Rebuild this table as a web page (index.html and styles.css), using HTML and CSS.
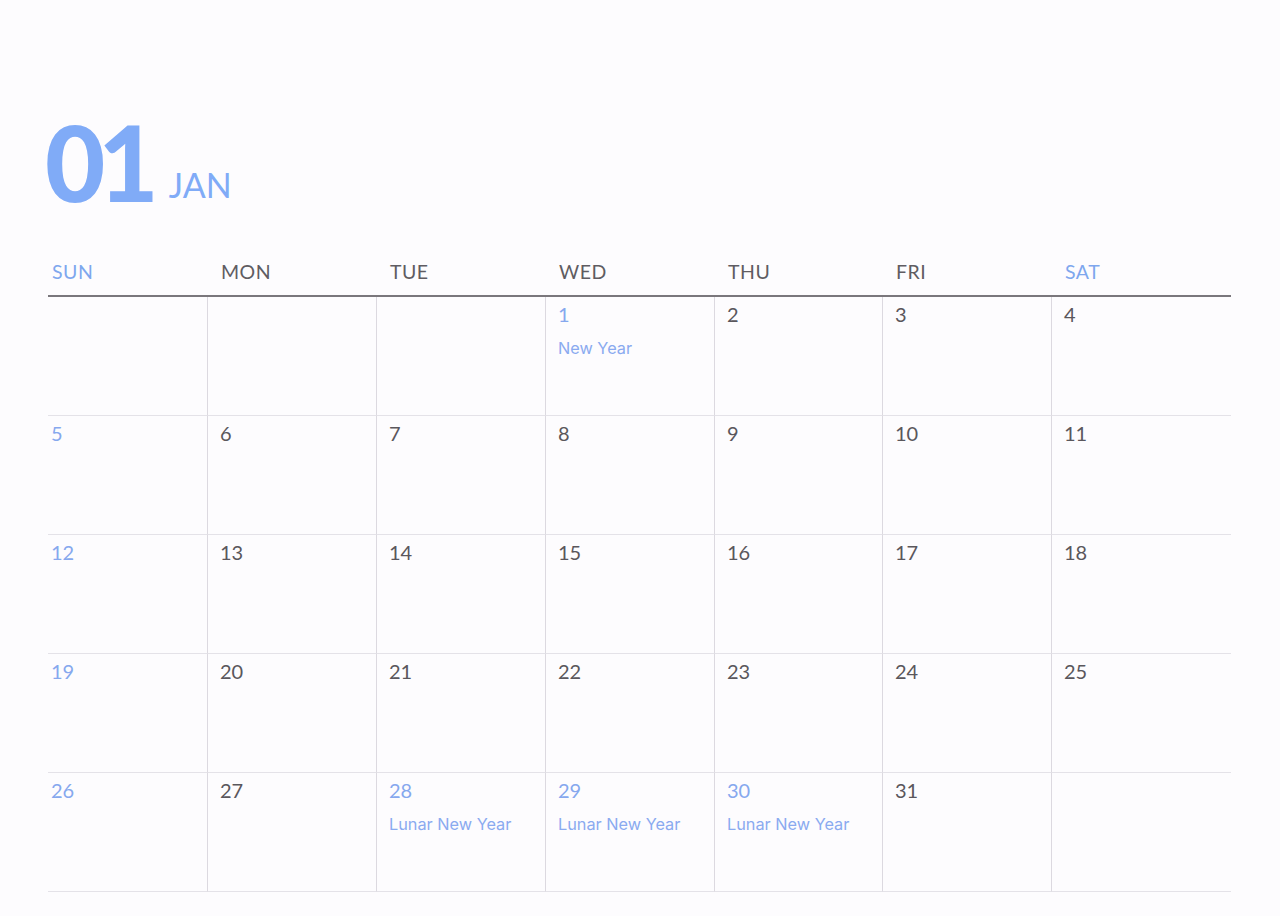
FILE: index.html
```html
<!DOCTYPE html>
<html>
<head>
<meta charset="utf-8">
<link rel="stylesheet" href="styles.css">
</head>
<body>
<div class="page">
  <div class="title">
    <span class="num">01</span>
    <span class="month">JAN</span>
  </div>
  <div class="weekdays">
    <div class="wd sun">SUN</div>
    <div class="wd">MON</div>
    <div class="wd">TUE</div>
    <div class="wd">WED</div>
    <div class="wd">THU</div>
    <div class="wd">FRI</div>
    <div class="wd sat">SAT</div>
  </div>
  <div class="grid">
    <div class="cell first"></div>
    <div class="cell"></div>
    <div class="cell"></div>
    <div class="cell"><div class="d hol">1</div><div class="ev">New Year</div></div>
    <div class="cell"><div class="d">2</div></div>
    <div class="cell"><div class="d">3</div></div>
    <div class="cell last"><div class="d">4</div></div>

    <div class="cell first"><div class="d hol">5</div></div>
    <div class="cell"><div class="d">6</div></div>
    <div class="cell"><div class="d">7</div></div>
    <div class="cell"><div class="d">8</div></div>
    <div class="cell"><div class="d">9</div></div>
    <div class="cell"><div class="d">10</div></div>
    <div class="cell last"><div class="d">11</div></div>

    <div class="cell first"><div class="d hol">12</div></div>
    <div class="cell"><div class="d">13</div></div>
    <div class="cell"><div class="d">14</div></div>
    <div class="cell"><div class="d">15</div></div>
    <div class="cell"><div class="d">16</div></div>
    <div class="cell"><div class="d">17</div></div>
    <div class="cell last"><div class="d">18</div></div>

    <div class="cell first"><div class="d hol">19</div></div>
    <div class="cell"><div class="d">20</div></div>
    <div class="cell"><div class="d">21</div></div>
    <div class="cell"><div class="d">22</div></div>
    <div class="cell"><div class="d">23</div></div>
    <div class="cell"><div class="d">24</div></div>
    <div class="cell last"><div class="d">25</div></div>

    <div class="cell first"><div class="d hol">26</div></div>
    <div class="cell"><div class="d">27</div></div>
    <div class="cell"><div class="d hol">28</div><div class="ev">Lunar New Year</div></div>
    <div class="cell"><div class="d hol">29</div><div class="ev">Lunar New Year</div></div>
    <div class="cell"><div class="d hol">30</div><div class="ev">Lunar New Year</div></div>
    <div class="cell"><div class="d">31</div></div>
    <div class="cell last"></div>
  </div>
</div>
</body>
</html>
```

FILE: styles.css
```css
html, body {
  margin: 0;
  padding: 0;
  background: #fdfcfe;
}
body {
  font-family: "Lato", "Inter", sans-serif;
  color: #555;
}
.page {
  width: 1183px;
  margin-left: 48px;
  padding-top: 98px;
}
.title {
  display: flex;
  align-items: flex-end;
  gap: 17px;
  height: 120px;
  margin-left: -3px;
}
.num {
  font-family: "Lato", sans-serif;
  font-weight: 900;
  font-size: 104px;
  line-height: 104px;
  color: #80abf7;
  letter-spacing: -7px;
  padding-bottom: 4px;
}
.month {
  font-family: "Lato", sans-serif;
  font-weight: 400;
  font-size: 34px;
  line-height: 34px;
  color: #80abf7;
  padding-bottom: 16px;
}
.weekdays {
  display: grid;
  grid-template-columns: 160px 169px 169px 169px 168px 169px 179px;
  margin-top: 42px;
  border-bottom: 2px solid #7a777c;
}
.wd {
  font-family: "Lato", sans-serif;
  font-size: 19.5px;
  line-height: 24px;
  padding: 0 0 11px 13px;
  color: #5f5c62;
  letter-spacing: 0.5px;
}
.wd.sun {
  padding-left: 4px;
}
.wd.sun, .wd.sat {
  color: #7ea7ee;
}
.grid {
  display: grid;
  grid-template-columns: 160px 169px 169px 169px 168px 169px 179px;
  grid-auto-rows: 119px;
}
.cell {
  border-right: 1px solid #dcd9e0;
  border-bottom: 1px solid #e4e2e8;
  padding: 5px 14px 0 12px;
}
.cell.first {
  padding-left: 3px;
}
.cell.last {
  border-right: none;
}
.d {
  font-family: "Lato", sans-serif;
  font-size: 20px;
  line-height: 24px;
  color: #5a575c;
}
.d.hol {
  color: #86a8ee;
}
.ev {
  font-family: "Inter", sans-serif;
  font-size: 16.3px;
  line-height: 20px;
  margin-top: 12px;
  color: #8aaaf0;
}
```
